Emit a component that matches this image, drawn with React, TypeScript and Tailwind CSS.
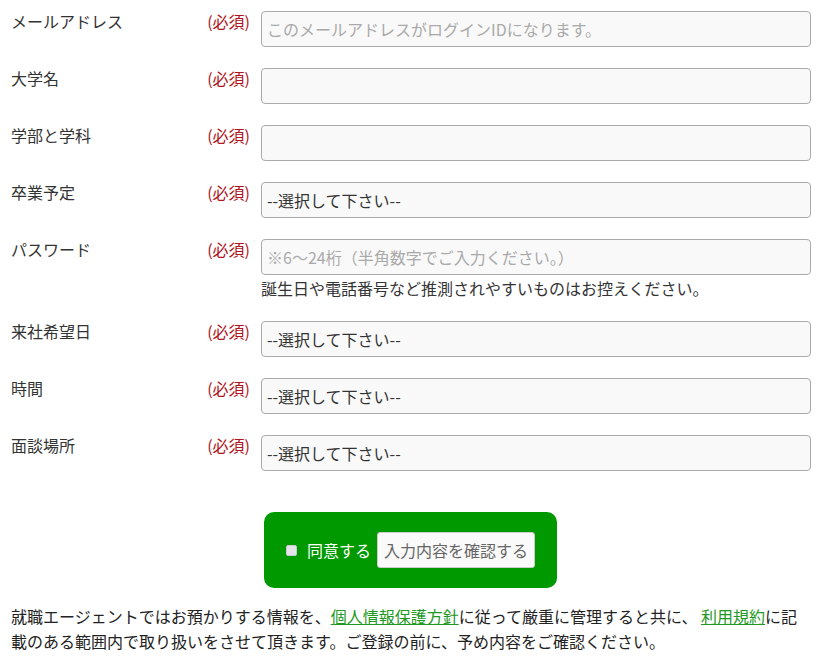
import { useState } from "react";

const font = { fontFamily: '"Noto Sans CJK JP", "Noto Sans", sans-serif' };

type Field = {
    label: string;
    kind: "text" | "select";
    placeholder?: string;
    note?: string;
};

const fields: Field[] = [
    { label: "メールアドレス", kind: "text", placeholder: "このメールアドレスがログインIDになります。" },
    { label: "大学名", kind: "text" },
    { label: "学部と学科", kind: "text" },
    { label: "卒業予定", kind: "select" },
    {
        label: "パスワード",
        kind: "text",
        placeholder: "※6～24桁（半角数字でご入力ください。）",
        note: "誕生日や電話番号など推測されやすいものはお控えください。",
    },
    { label: "来社希望日", kind: "select" },
    { label: "時間", kind: "select" },
    { label: "面談場所", kind: "select" },
];

const boxClass =
    "block w-[550px] h-9 rounded-[4px] border border-[#aaaaaa] bg-[#f9f9f9] px-[5px] text-base text-[#333] outline-none";

const App = () => {
    const [agree, setAgree] = useState(false);

    return (
        <div className="w-[828px] min-h-[661px] bg-white text-[#333] text-base leading-6" style={font}>
            <div className="w-[821px] pt-[10px]">
                {/* Form rows */}
                {fields.map((f, i) => (
                    <div key={i} className="flex items-start pb-[20px]">
                        <div className="w-[250px] pl-[11px] flex justify-between shrink-0 -mt-px">
                            <span>{f.label}</span>
                            <span className="text-[#b0141c]">(必須)</span>
                        </div>
                        <div className="ml-[11px] pt-px">
                            {f.kind === "text" ? (
                                <input
                                    type="text"
                                    placeholder={f.placeholder}
                                    className={boxClass + " placeholder:text-[#a9a9a9]"}
                                    style={font}
                                />
                            ) : (
                                <select className={boxClass + " appearance-none"} style={font}>
                                    <option>--選択して下さい--</option>
                                </select>
                            )}
                            {f.note && <p className="mt-px">{f.note}</p>}
                        </div>
                    </div>
                ))}

                {/* Agreement + confirm */}
                <div className="flex justify-center pt-[21px]">
                    <div className="w-[293px] h-[76px] rounded-[10px] bg-[#009a00] flex items-center justify-center">
                        <label className="flex items-center text-white">
                            <input
                                type="checkbox"
                                checked={agree}
                                onChange={(e) => setAgree(e.target.checked)}
                                className="w-[11px] h-[11px] mr-[10px] appearance-none bg-[#e4e4ea] border border-[#c9c9d0] rounded-[2px]"
                            />
                            同意する
                        </label>
                        <button
                            className="ml-[6px] h-9 px-[6px] rounded-[3px] border border-[#cccccc] bg-[#fafafa] text-[#666] text-base"
                            style={font}
                        >
                            入力内容を確認する
                        </button>
                    </div>
                </div>

                {/* Footer note */}
                <p className="pl-[11px] pr-[10px] mt-[16px] leading-[25px] text-[#222]">
                    就職エージェントではお預かりする情報を、
                    <a href="#" className="text-[#229922] underline">個人情報保護方針</a>
                    に従って厳重に管理すると共に、 <a href="#" className="text-[#229922] underline">利用規約</a>
                    に記載のある範囲内で取り扱いをさせて頂きます。ご登録の前に、予め内容をご確認ください。
                </p>
            </div>
        </div>
    );
};

export default App;
